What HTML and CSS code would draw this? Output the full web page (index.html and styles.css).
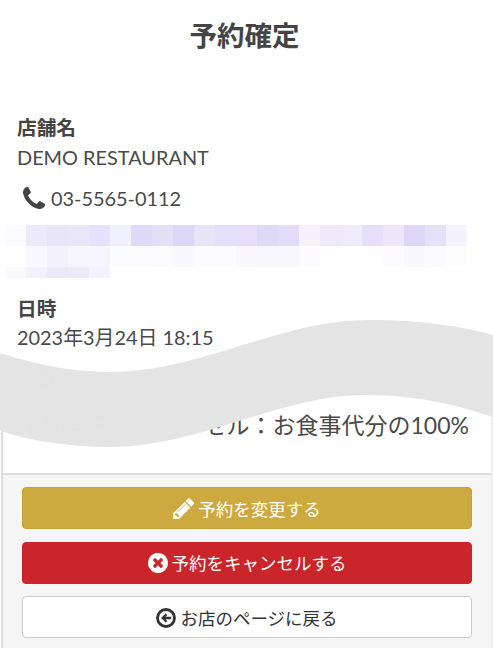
FILE: index.html
```html
<!DOCTYPE html>
<html lang="ja">
<head>
<meta charset="utf-8">
<title>予約確定</title>
<link rel="stylesheet" href="styles.css">
</head>
<body>
<div class="page">
  <h1 class="title">予約確定</h1>
  <section class="info shop">
    <h2 class="label">店舗名</h2>
    <p class="value">DEMO RESTAURANT</p>
    <p class="value phone">
      <svg class="icon-phone" viewBox="0 128 1408 1408" aria-hidden="true"><path d="M1408 1240q0 27-10 70.5t-21 68.5q-21 50-122 106-94 51-186 51-27 0-53-3.5t-57.5-12.5-47-14.5-55.5-20.5-49-18q-98-35-175-83-127-79-264-216t-216-264q-48-77-83-175-3-9-18-49t-20.5-55.5-14.5-47-12.5-57.5-3.5-53q0-92 51-186 56-101 106-122 25-11 68.5-21t70.5-10q14 0 21 3 18 6 53 76 11 19 30 54t35 63.5 31 53.5q3 4 17.5 25t21.5 35.5 7 28.5q0 20-28.5 50t-62 55-62 53-28.5 46q0 9 5 22.5t8.5 20.5 14 24 11.5 19q76 137 174 235t235 174q2 1 19 11.5t24 14 20.5 8.5 22.5 5q18 0 46-28.5t53-62 55-62 50-28.5q14 0 28.5 7t35.5 21.5 25 17.5q25 15 53.5 31t63.5 35 54 30q70 35 76 53 3 7 3 21z"/></svg>
      <span>03-5565-0112</span>
    </p>
    <svg class="mosaic" viewBox="0 0 462 53" aria-hidden="true" shape-rendering="crispEdges">
      <g>
        <rect x="0" y="0" width="21" height="21" fill="#fbfaff"/><rect x="21" y="0" width="21" height="21" fill="#ebe9fb"/><rect x="42" y="0" width="21" height="21" fill="#e9e5f8"/><rect x="63" y="0" width="21" height="21" fill="#e9e6fa"/><rect x="84" y="0" width="21" height="21" fill="#e6e2fd"/><rect x="105" y="0" width="21" height="21" fill="#f1f0fd"/><rect x="126" y="0" width="21" height="21" fill="#dfdaf8"/><rect x="147" y="0" width="21" height="21" fill="#e3dff7"/><rect x="168" y="0" width="21" height="21" fill="#dcd6f8"/><rect x="189" y="0" width="21" height="21" fill="#e8e4f8"/><rect x="210" y="0" width="21" height="21" fill="#e4e0fb"/><rect x="231" y="0" width="21" height="21" fill="#e5dffa"/><rect x="252" y="0" width="21" height="21" fill="#dfd9f8"/><rect x="273" y="0" width="21" height="21" fill="#e3dcf9"/><rect x="294" y="0" width="21" height="21" fill="#f5f2fc"/><rect x="315" y="0" width="21" height="21" fill="#eeeafa"/><rect x="336" y="0" width="21" height="21" fill="#eeecfa"/><rect x="357" y="0" width="21" height="21" fill="#e5dffb"/><rect x="378" y="0" width="21" height="21" fill="#ebe7f8"/><rect x="399" y="0" width="21" height="21" fill="#dcd7f8"/><rect x="420" y="0" width="21" height="21" fill="#e5e1f9"/><rect x="441" y="0" width="21" height="21" fill="#f4f2fd"/>
      </g>
      <g>
        <rect x="21" y="21" width="21" height="21" fill="#f9f8fe"/><rect x="42" y="21" width="21" height="21" fill="#f3f2fc"/><rect x="63" y="21" width="21" height="21" fill="#f6f4fd"/><rect x="84" y="21" width="21" height="21" fill="#f6f4fd"/><rect x="105" y="21" width="21" height="21" fill="#fcfbfe"/><rect x="126" y="21" width="21" height="21" fill="#fcfcfe"/><rect x="147" y="21" width="21" height="21" fill="#fbfbfe"/><rect x="168" y="21" width="21" height="21" fill="#f9f8fe"/><rect x="189" y="21" width="21" height="21" fill="#fcfcfe"/><rect x="210" y="21" width="21" height="21" fill="#fcfcfe"/><rect x="231" y="21" width="21" height="21" fill="#f9f8fd"/><rect x="252" y="21" width="21" height="21" fill="#f8f7fc"/><rect x="273" y="21" width="21" height="21" fill="#f8f7fc"/><rect x="294" y="21" width="21" height="21" fill="#fcfcfe"/><rect x="315" y="21" width="21" height="21" fill="#fefefe"/><rect x="336" y="21" width="21" height="21" fill="#fefefe"/><rect x="357" y="21" width="21" height="21" fill="#fefefe"/><rect x="378" y="21" width="21" height="21" fill="#fcfcfe"/><rect x="399" y="21" width="21" height="21" fill="#f9f8fd"/><rect x="420" y="21" width="21" height="21" fill="#faf9fe"/><rect x="441" y="21" width="21" height="21" fill="#fdfdfe"/>
      </g>
      <g>
        <rect x="0" y="42" width="21" height="11" fill="#fbf9fe"/><rect x="21" y="42" width="21" height="11" fill="#f3f1fc"/><rect x="42" y="42" width="21" height="11" fill="#ebe8fa"/><rect x="63" y="42" width="21" height="11" fill="#edeafa"/><rect x="84" y="42" width="21" height="11" fill="#f4f2fc"/>
      </g>
    </svg>
  </section>
  <section class="info date">
    <h2 class="label">日時</h2>
    <p class="value date-value">2023年3月24日 18:15</p>
  </section>
  <section class="info guests">
    <h2 class="label">人数</h2>
  </section>
  <div class="panel">
    <p class="policy">予約当日のキャンセル：お食事代分の100%</p>
    <footer class="actions">
      <a class="btn btn-gold">
        <svg class="icon-pencil" viewBox="0 128 1536 1536" aria-hidden="true"><path d="M491 1536l91-91-235-235-91 91v107h128v128h107zm523-928q0-22-22-22-10 0-17 7l-542 542q-7 7-7 17 0 22 22 22 10 0 17-7l542-542q7-7 7-17zm-54-192l416 416-832 832h-416v-416zm683 96q0 53-37 90l-166 166-416-416 166-165q36-38 90-38 53 0 91 38l235 234q37 39 37 91z" transform="translate(-107 0)"/></svg>
        <span>予約を変更する</span>
      </a>
      <a class="btn btn-red">
        <svg class="icon-circle" viewBox="128 128 1536 1536" aria-hidden="true"><path d="M1277 1122q0-26-19-45l-181-181 181-181q19-19 19-45 0-27-19-46l-90-90q-19-19-46-19-26 0-45 19l-181 181-181-181q-19-19-45-19-27 0-46 19l-90 90q-19 19-19 46 0 26 19 45l181 181-181 181q-19 19-19 45 0 27 19 46l90 90q19 19 46 19 26 0 45-19l181-181 181 181q19 19 45 19 27 0 46-19l90-90q19-19 19-46zm387-226q0 209-103 385.5t-279.5 279.5-385.5 103-385.5-103-279.5-279.5-103-385.5 103-385.5 279.5-279.5 385.5-103 385.5 103 279.5 279.5 103 385.5z"/></svg>
        <span>予約をキャンセルする</span>
      </a>
      <a class="btn btn-white">
        <svg class="icon-circle" viewBox="0 0 24 24" aria-hidden="true"><circle class="ring" cx="12" cy="12" r="10.2"/><path d="M6 12l5.6-5.4 1.9 1.9-2.2 2h6.9v3h-6.9l2.2 2-1.9 1.9z"/></svg>
        <span>お店のページに戻る</span>
      </a>
    </footer>
  </div>
  <svg class="wave" viewBox="0 0 493 648" aria-hidden="true">
    <path d="M0 353C40 366 78 372 110 372C200 372 280 320 368 320C420 320 460 326 493 335V417C460 406 420 395 365 395C280 395 200 447 110 447C70 447 30 441 0 431Z"/>
  </svg>
</div>
</body>
</html>
```

FILE: styles.css
```css
* { box-sizing: border-box; }

html, body {
  margin: 0;
  height: 100%;
  background: #fff;
}

body {
  font-family: Lato, "Noto Sans CJK JP", sans-serif;
  color: #4a4a4a;
  overflow: hidden;
}

.page {
  position: relative;
  display: flex;
  flex-direction: column;
  height: 648px;
  overflow: hidden;
}

.title {
  margin: 0;
  padding: 17px 4px 0 0;
  height: 100px;
  font-size: 27.5px;
  line-height: 38px;
  font-weight: 700;
  text-align: center;
  color: #444;
}

.info { padding: 0 17px; }

.label {
  margin: 0;
  font-size: 19.7px;
  line-height: 29px;
  font-weight: 700;
  color: #444;
}

.value {
  margin: 0;
  font-size: 19.9px;
  line-height: 30px;
}

.shop { padding-top: 13px; }

.phone {
  display: flex;
  align-items: center;
  margin-top: 11px;
  padding-left: 6px;
}

.icon-phone {
  width: 22px;
  height: 22px;
  margin-right: 6px;
  fill: #444;
}

.mosaic {
  display: block;
  width: 462px;
  height: 53px;
  margin: 12px 0 0 -12px;
}

.date { padding-top: 16px; }

.date-value { margin-top: -1px; }

.guests { padding-top: 11px; }

.panel {
  flex: 1;
  display: flex;
  flex-direction: column;
  margin-top: 0;
  margin-left: 1px;
  border-left: 2px solid #ddd;
  border-right: 2px solid #eee;
}

.policy {
  margin: 0;
  height: 81px;
  padding-top: 16px;
  padding-right: 22px;
  font-size: 23px;
  line-height: 34px;
  text-align: right;
  white-space: nowrap;
}

.actions {
  flex: 1;
  display: flex;
  flex-direction: column;
  gap: 12.5px;
  padding: 12px 19px 0;
  background: #f5f5f5;
  border-top: 2px solid #ddd;
}

.btn {
  display: flex;
  align-items: center;
  justify-content: center;
  gap: 4px;
  height: 42px;
  flex: none;
  border: 1px solid transparent;
  border-radius: 4px;
  font-size: 17.5px;
}

.btn-gold {
  background: #cdaa3f;
  border-color: #c5a237;
  color: #fff;
  fill: #fff;
}

.btn-red {
  background: #c9252b;
  border-color: #c9252b;
  color: #fff;
  fill: #fff;
}

.btn-white {
  background: #fff;
  border-color: #ccc;
  color: #333;
  fill: #333;
}

.icon-pencil {
  width: 21px;
  height: 21px;
  margin-top: 1px;
}

.icon-circle {
  width: 20px;
  height: 20px;
  margin-top: 1px;
}

.ring {
  fill: none;
  stroke: #333;
  stroke-width: 3.4;
}

.wave {
  position: absolute;
  left: 0;
  top: 0;
  width: 493px;
  height: 648px;
  fill: #e4e4e4;
  fill-opacity: 0.995;
  pointer-events: none;
}
```
